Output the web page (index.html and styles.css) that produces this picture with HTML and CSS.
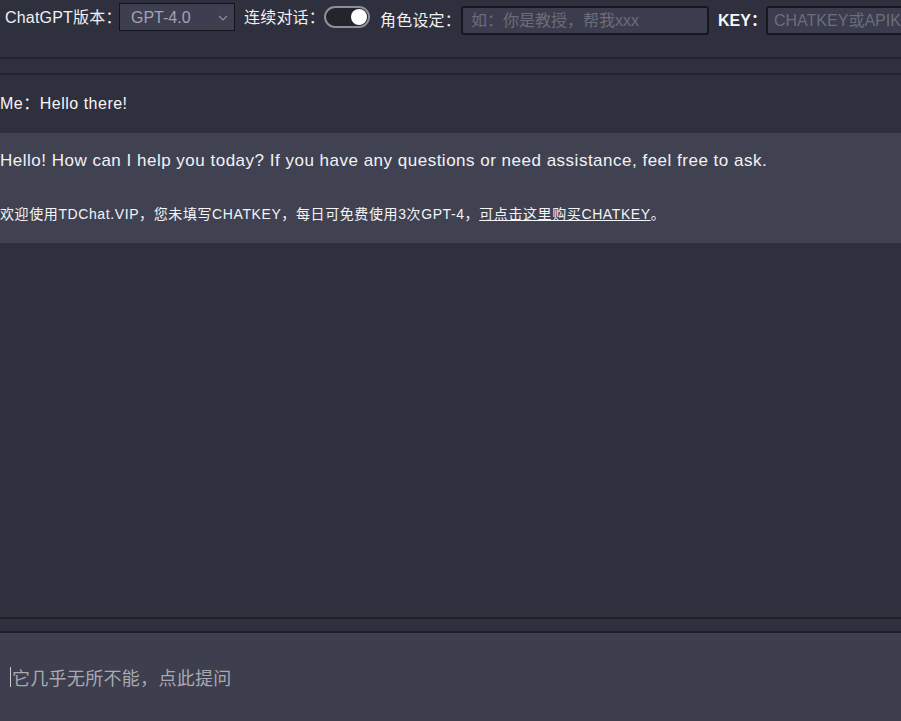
FILE: index.html
```html
<!DOCTYPE html>
<html lang="zh">
<head>
<meta charset="utf-8">
<title>TDChat</title>
<link rel="stylesheet" href="styles.css">
</head>
<body>
<div class="app">
  <header class="toolbar">
    <span class="label l-version">ChatGPT版本：</span>
    <span class="select">GPT-4.0
      <svg class="chev" width="10" height="6" viewBox="0 0 10 6"><path d="M1 1 L5 5 L9 1" fill="none" stroke="#8c8d97" stroke-width="1.2"/></svg>
    </span>
    <span class="label l-cont">连续对话：</span>
    <span class="toggle"><span class="knob"></span></span>
    <span class="label low l-role">角色设定：</span>
    <input class="input role" placeholder="如：你是教授，帮我xxx">
    <span class="label low key">KEY：</span>
    <input class="input apikey" placeholder="CHATKEY或APIKEY">
  </header>
  <div class="band"></div>
  <main class="messages">
    <div class="msg me">Me：Hello there!</div>
    <div class="msg ai">
      <p class="ai-text">Hello! How can I help you today? If you have any questions or need assistance, feel free to ask.</p>
      <p class="notice">欢迎使用TDChat.VIP，您未填写CHATKEY，每日可免费使用3次GPT-4，<a href="#">可点击这里购买CHATKEY</a>。</p>
    </div>
  </main>
  <div class="band small"></div>
  <div class="composer">
    <span class="caret"></span><span class="placeholder">它几乎无所不能，点此提问</span>
  </div>
</div>
</body>
</html>
```
FILE: styles.css
```css
html, body {
  margin: 0;
  padding: 0;
  background: #2f303d;
  height: 100%;
  overflow: hidden;
}
body {
  font-family: "Liberation Sans", "Noto Sans CJK SC", sans-serif;
  color: #f2f2f4;
}
.app {
  display: flex;
  flex-direction: column;
  height: 721px;
}
.toolbar {
  display: flex;
  align-items: flex-start;
  height: 59px;
  box-sizing: border-box;
  border-bottom: 2px solid #23242d;
  padding: 3px 0 0 5px;
  white-space: nowrap;
  overflow: hidden;
  flex-shrink: 0;
}
.label {
  font-size: 16px;
  line-height: 30px;
  color: #f0f0f2;
  flex-shrink: 0;
  letter-spacing: 0.2px;
}
.l-version { width: 114px; }
.l-cont { width: 80px; margin-left: 9px; }
.l-role { width: 81px; margin-left: 10px; }
.label.low {
  margin-top: 3px;
}
.select {
  box-sizing: border-box;
  width: 116px;
  height: 28px;
  flex-shrink: 0;
  background: #3d3e50;
  border: 1px solid #14141c;
  color: #a3a4ad;
  font-size: 16px;
  line-height: 26px;
  padding: 1px 6px 0 11px;
  display: flex;
  align-items: center;
  justify-content: space-between;
}
.chev { margin-top: 0; }
.toggle {
  box-sizing: border-box;
  width: 46px;
  height: 22px;
  flex-shrink: 0;
  margin-top: 3px;
  border-radius: 11px;
  border: 2px solid #8d8e97;
  background: #24252c;
  display: flex;
  justify-content: flex-end;
  align-items: center;
  padding-right: 1px;
}
.knob {
  width: 16px;
  height: 16px;
  border-radius: 50%;
  background: #ffffff;
}
.input {
  box-sizing: border-box;
  height: 29px;
  margin-top: 3px;
  flex-shrink: 0;
  background: #3b3c4e;
  border: 2px solid #17171f;
  border-radius: 3px;
  color: #e0e0e6;
  font-family: "Liberation Sans", "Noto Sans CJK SC", sans-serif;
  font-size: 16px;
  padding: 1px 8px 0;
  outline: none;
}
.input::placeholder { color: #6c6d79; }
.role {
  width: 248px;
}
.key {
  width: 48px;
  margin-left: 9px;
  font-weight: bold;
  font-size: 16px;
  color: #f6f6f8;
  letter-spacing: 0;
}
.apikey {
  width: 160px;
  padding-left: 6px;
}
.band {
  height: 14px;
  border-bottom: 2px solid #23242d;
  flex-shrink: 0;
}
.band.small {
  height: 12px;
  border-top: 2px solid #1f2027;
  border-bottom: 2px solid #1f2027;
}
.messages {
  flex: 1;
}
.msg {
  font-size: 16px;
}
.me {
  height: 58px;
  line-height: 58px;
  color: #f6f6f8;
  letter-spacing: 0.5px;
}
.ai {
  background: #404252;
  height: 110px;
  box-sizing: border-box;
  padding-top: 18px;
}
.ai-text {
  margin: 0;
  font-size: 17px;
  line-height: 20px;
  letter-spacing: 0.5px;
  color: #f2f2f4;
}
.notice {
  margin: 34px 0 0;
  font-size: 14px;
  line-height: 18px;
  letter-spacing: 0.6px;
  color: #f4f4f6;
}
.notice a {
  color: #f4f4f6;
  text-decoration: underline;
}
.composer {
  height: 88px;
  background: #3d3e4e;
  display: flex;
  align-items: center;
  padding-left: 10px;
  flex-shrink: 0;
}
.caret {
  width: 1px;
  height: 20px;
  background: #c8c8cc;
  margin-right: 1px;
}
.placeholder {
  font-size: 18px;
  letter-spacing: 0.3px;
  color: #a9aab1;
}
```
